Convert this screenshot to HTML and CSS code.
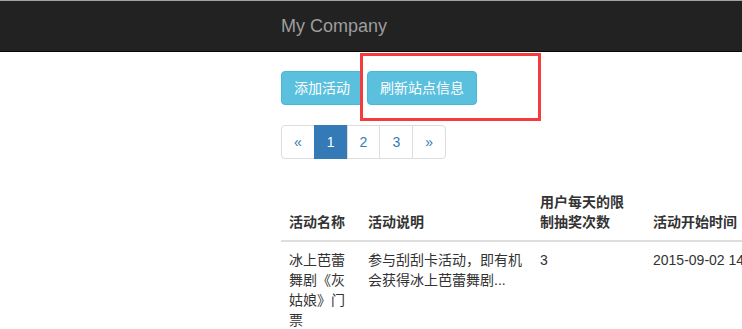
FILE: index.html
```html
<!DOCTYPE html>
<html lang="zh-CN">

<head>
  <meta charset="UTF-8" />
  <meta name="viewport" content="width=device-width, initial-scale=1.0" />
  <title>活动管理</title>
  <link rel="stylesheet" href="styles.css">
</head>

<body>
  <!-- top bar -->
  <div class="navbar">
    <div class="w">
      <a class="brand" href="#">My Company</a>
    </div>
  </div>

  <div class="w">
    <!-- action buttons -->
    <div class="actions">
      <button class="btn">添加活动</button>
      <button class="btn">刷新站点信息</button>
    </div>

    <!-- pages -->
    <ul class="pagination">
      <li><a href="#">&laquo;</a></li>
      <li class="active"><a href="#">1</a></li>
      <li><a href="#">2</a></li>
      <li><a href="#">3</a></li>
      <li><a href="#">&raquo;</a></li>
    </ul>

    <!-- activity list -->
    <table class="list">
      <thead>
        <tr>
          <th class="c-name">活动名称</th>
          <th class="c-desc">活动说明</th>
          <th class="c-times">用户每天的限制抽奖次数</th>
          <th class="c-start">活动开始时间</th>
          <th class="c-end">活动结束时间</th>
        </tr>
      </thead>
      <tbody>
        <tr>
          <td>冰上芭蕾舞剧《灰姑娘》门票</td>
          <td>参与刮刮卡活动，即有机会获得冰上芭蕾舞剧...</td>
          <td>3</td>
          <td>2015-09-02 14:00:00</td>
          <td>2015-09-30 14:00:00</td>
        </tr>
      </tbody>
    </table>
  </div>

  <!-- red mark drawn over the refresh button -->
  <div class="mark"></div>
</body>

</html>
```

FILE: styles.css
```css
* {
  margin: 0;
  padding: 0;
  box-sizing: border-box;
}

html,
body {
  overflow: hidden;
}

body {
  position: relative;
  font: 14px/20px "Liberation Sans", "Noto Sans CJK SC", sans-serif;
  color: #333;
  background: #fff;
}

ul {
  list-style: none;
}

a {
  text-decoration: none;
}

.w {
  padding-left: 281px;
}

.navbar {
  height: 52px;
  background: #222;
  border-top: 1px solid #a4a4a4;
  border-bottom: 1px solid #080808;
  margin-bottom: 19px;
}

.navbar .brand {
  display: block;
  padding: 15px 0;
  font-size: 18px;
  line-height: 20px;
  color: #9d9d9d;
}

.actions {
  display: flex;
  gap: 4px;
}

.btn {
  height: 34px;
  padding: 6px 12px;
  font: 14px/20px "Liberation Sans", "Noto Sans CJK SC", sans-serif;
  color: #fff;
  background: #5bc0de;
  border: 1px solid #46b8da;
  border-radius: 4px;
  cursor: pointer;
}

.pagination {
  display: flex;
  margin: 20px 0 25px;
}

.pagination li a {
  display: block;
  height: 34px;
  padding: 6px 12px;
  margin-left: -1px;
  color: #337ab7;
  border: 1px solid #ddd;
  background: #fff;
}

.pagination li:first-child a {
  margin-left: 0;
  border-radius: 4px 0 0 4px;
}

.pagination li:last-child a {
  border-radius: 0 4px 4px 0;
}

.pagination .active a {
  color: #fff;
  background: #337ab7;
  border-color: #337ab7;
}

.list {
  width: 760px;
  table-layout: fixed;
  border-collapse: collapse;
}

.list th,
.list td {
  padding: 8px;
  text-align: left;
  vertical-align: top;
}

.list th {
  vertical-align: bottom;
  font-weight: bold;
  border-bottom: 2px solid #ddd;
}

.list .c-name {
  width: 79px;
}

.list .c-desc {
  width: 172px;
}

.list .c-times {
  width: 113px;
}

.list .c-start {
  width: 198px;
}

.mark {
  position: absolute;
  left: 360px;
  top: 53px;
  width: 181px;
  height: 68px;
  border: 3px solid #f53b3b;
}
```
